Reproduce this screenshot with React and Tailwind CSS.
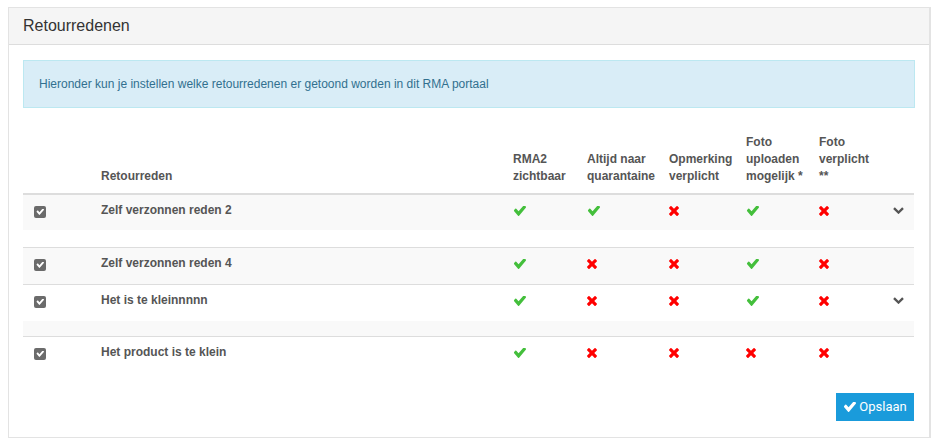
import React from "react";

const rows = [
  { name: "Zelf verzonnen reden 2", vals: [1, 1, 0, 1, 0], chevron: true, detail: "white", dh: "h-[17px]" },
  { name: "Zelf verzonnen reden 4", vals: [1, 0, 0, 1, 0], chevron: false },
  { name: "Het is te kleinnnnn", vals: [1, 0, 0, 1, 0], chevron: true, detail: "gray", dh: "h-[15px]" },
  { name: "Het product is te klein", vals: [1, 0, 0, 0, 0], chevron: false },
];

function Check({ color = "#44bf3c", w = 13, h = 10 }) {
  return (
    <svg width={w} height={h} viewBox="0 190 1671 1100" preserveAspectRatio="none" className="inline-block">
      <path
        fill={color}
        d="M1671 326q0 40-28 68l-724 724-136 136q-28 28-68 28t-68-28l-136-136-362-362q-28-28-28-68t28-68l136-136q28-28 68-28t68 28l294 295 656-657q28-28 68-28t68 28l136 136q28 28 28 68z"
      />
    </svg>
  );
}

function Cross() {
  return (
    <svg width="10" height="10" viewBox="0 0 1188 1188" className="inline-block">
      <path
        fill="#ff0000"
        d="M1188 956q0 40-28 68l-136 136q-28 28-68 28t-68-28l-294-294-294 294q-28 28-68 28t-68-28l-136-136q-28-28-28-68t28-68l294-294-294-294q-28-28-28-68t28-68l136-136q28-28 68-28t68 28l294 294 294-294q28-28 68-28t68 28l136 136q28 28 28 68t-28 68l-294 294 294 294q28 28 28 68z"
      />
    </svg>
  );
}

function Chevron() {
  return (
    <svg width="11" height="7" viewBox="0 0 11 7" className="inline-block">
      <path d="M1 1.2 L5.5 5.5 L10 1.2" fill="none" stroke="#555" strokeWidth="2.4" />
    </svg>
  );
}

function Box() {
  return (
    <span className="inline-flex items-center justify-center w-[12px] h-[12px] rounded-[2px] bg-[#6b6b6b] ml-[3px] mt-[3px]">
      <Check color="#ffffff" w={8} h={6} />
    </span>
  );
}

export default function App() {
  return (
    <div className="bg-white w-[938px] h-[445px] pt-[7px] pl-[8px] font-['Liberation_Sans',Arial,sans-serif]">
      <div className="w-[923px] h-[431px] border border-[#e3e3e3] border-r-2">
        <div className="h-[37px] bg-[#f5f5f5] border-b border-[#dddddd] px-[14px] flex items-center">
          <h3 className="text-[16px] text-[#333333] leading-none">Retourredenen</h3>
        </div>
        <div className="px-[14px] pt-[15px]">
          <div className="h-[48px] bg-[#d9edf7] border border-[#bce8f1] flex items-center px-[15px] text-[12px] text-[#31708f]">
            Hieronder kun je instellen welke retourredenen er getoond worden in dit RMA portaal
          </div>

          <table className="w-[891px] mt-[18px] table-fixed border-separate border-spacing-0 text-[12px] text-[#555555]">
            <colgroup>
              <col className="w-[70px]" />
              <col className="w-[412px]" />
              <col className="w-[74px]" />
              <col className="w-[82px]" />
              <col className="w-[77px]" />
              <col className="w-[73px]" />
              <col className="w-[74px]" />
              <col className="w-[29px]" />
            </colgroup>
            <thead>
              <tr className="align-bottom text-left leading-[17px] font-bold">
                {["", "Retourreden", "RMA2 zichtbaar", "Altijd naar quarantaine", "Opmerking verplicht", "Foto uploaden mogelijk *", "Foto verplicht **", ""].map((t, k) => (
                  <th key={k} className="p-[8px] border-b-2 border-[#dddddd]">
                    {t}
                  </th>
                ))}
              </tr>
            </thead>
            <tbody>
              {rows.map((r, i) => {
                const bt = i > 0 ? "border-t border-[#dddddd]" : "";
                return (
                  <React.Fragment key={i}>
                    <tr className={`${i > 0 ? "h-[37px]" : "h-[35px]"} align-top ${i < 2 ? "bg-[#f9f9f9]" : "bg-white"}`}>
                      <td className={`px-[8px] pt-[8px] leading-[17px] ${bt}`}>
                        <Box />
                      </td>
                      <td className={`px-[8px] pt-[7px] font-bold leading-[17px] ${bt}`}>{r.name}</td>
                      {r.vals.map((v, j) => (
                        <td key={j} className={`px-[8px] pt-[7px] leading-[17px] ${bt}`}>
                          {v ? <Check /> : <Cross />}
                        </td>
                      ))}
                      <td className={`px-[8px] pt-[7px] leading-[17px] ${bt}`}>{r.chevron && <Chevron />}</td>
                    </tr>
                    {r.detail && (
                      <tr className={`${r.dh} ${r.detail === "gray" ? "bg-[#f9f9f9]" : "bg-white"}`}>
                        <td colSpan={8}></td>
                      </tr>
                    )}
                  </React.Fragment>
                );
              })}
            </tbody>
          </table>

          <div className="flex justify-end mt-[20px] pr-[1px]">
            <button className="w-[78px] h-[28px] bg-[#1a9bdb] text-white text-[13px] font-['Roboto',sans-serif] flex items-center justify-center gap-[3px]">
              <Check color="#ffffff" w={13} h={10} />
              Opslaan
            </button>
          </div>
        </div>
      </div>
    </div>
  );
}
